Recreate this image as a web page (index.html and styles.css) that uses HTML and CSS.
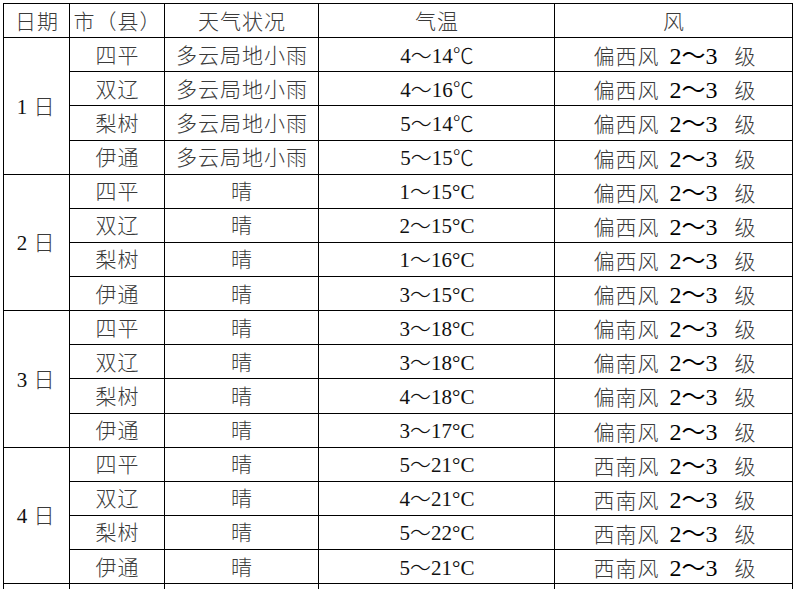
FILE: index.html
```html
<!DOCTYPE html>
<html lang="zh">
<head>
<meta charset="utf-8">
<link rel="stylesheet" href="styles.css">
</head>
<body>
<table class="wx">
  <colgroup>
    <col class="c-date"><col class="c-city"><col class="c-sky"><col class="c-temp"><col class="c-wind">
  </colgroup>
  <thead>
    <tr><th>日期</th><th>市（县）</th><th>天气状况</th><th>气温</th><th>风</th></tr>
  </thead>
  <tbody>
    <tr><td rowspan="4" class="date"><span class="num">1</span> 日</td><td>四平</td><td>多云局地小雨</td><td class="num">4～14℃</td><td class="wind">偏西风<span class="lvl">2～3</span>级</td></tr>
    <tr><td>双辽</td><td>多云局地小雨</td><td class="num">4～16℃</td><td class="wind">偏西风<span class="lvl">2～3</span>级</td></tr>
    <tr><td>梨树</td><td>多云局地小雨</td><td class="num">5～14℃</td><td class="wind">偏西风<span class="lvl">2～3</span>级</td></tr>
    <tr><td>伊通</td><td>多云局地小雨</td><td class="num">5～15℃</td><td class="wind">偏西风<span class="lvl">2～3</span>级</td></tr>

    <tr><td rowspan="4" class="date"><span class="num">2</span> 日</td><td>四平</td><td>晴</td><td class="num">1～15°C</td><td class="wind">偏西风<span class="lvl">2～3</span>级</td></tr>
    <tr><td>双辽</td><td>晴</td><td class="num">2～15°C</td><td class="wind">偏西风<span class="lvl">2～3</span>级</td></tr>
    <tr><td>梨树</td><td>晴</td><td class="num">1～16°C</td><td class="wind">偏西风<span class="lvl">2～3</span>级</td></tr>
    <tr><td>伊通</td><td>晴</td><td class="num">3～15°C</td><td class="wind">偏西风<span class="lvl">2～3</span>级</td></tr>

    <tr><td rowspan="4" class="date"><span class="num">3</span> 日</td><td>四平</td><td>晴</td><td class="num">3～18°C</td><td class="wind">偏南风<span class="lvl">2～3</span>级</td></tr>
    <tr><td>双辽</td><td>晴</td><td class="num">3～18°C</td><td class="wind">偏南风<span class="lvl">2～3</span>级</td></tr>
    <tr><td>梨树</td><td>晴</td><td class="num">4～18°C</td><td class="wind">偏南风<span class="lvl">2～3</span>级</td></tr>
    <tr><td>伊通</td><td>晴</td><td class="num">3～17°C</td><td class="wind">偏南风<span class="lvl">2～3</span>级</td></tr>

    <tr><td rowspan="4" class="date"><span class="num">4</span> 日</td><td>四平</td><td>晴</td><td class="num">5～21°C</td><td class="wind">西南风<span class="lvl">2～3</span>级</td></tr>
    <tr><td>双辽</td><td>晴</td><td class="num">4～21°C</td><td class="wind">西南风<span class="lvl">2～3</span>级</td></tr>
    <tr><td>梨树</td><td>晴</td><td class="num">5～22°C</td><td class="wind">西南风<span class="lvl">2～3</span>级</td></tr>
    <tr><td>伊通</td><td>晴</td><td class="num">5～21°C</td><td class="wind">西南风<span class="lvl">2～3</span>级</td></tr>

    <tr class="tail"><td></td><td></td><td></td><td></td><td></td></tr>
  </tbody>
</table>
</body>
</html>
```

FILE: styles.css
```css
html, body {
  margin: 0;
  padding: 0;
  background: #fff;
  overflow: hidden;
}
body {
  padding: 3px 0 0 3px;
}
.wx {
  border-collapse: collapse;
  table-layout: fixed;
  width: 789px;
  font-family: "Liberation Serif", "Noto Sans CJK SC", serif;
  font-size: 21px;
  color: #3a3a3a;
}
.c-date { width: 66px; }
.c-city { width: 95px; }
.c-sky { width: 154px; }
.c-temp { width: 236px; }
.c-wind { width: 238px; }
.wx th, .wx td {
  border: 1px solid #000;
  height: 34.125px;
  padding: 3px 0 0 0;
  text-align: center;
  vertical-align: middle;
  font-weight: 300;
  line-height: 1;
  white-space: nowrap;
  box-sizing: border-box;
  letter-spacing: 1px;
  text-indent: 1px;
}
.wx .num {
  color: #111;
  font-size: 21px;
  letter-spacing: 0;
}
.wx td.num {
  text-indent: 0;
  padding-left: 1px;
}
.wx .date {
  padding-right: 2px;
}
.wx .wind {
  padding-left: 2px;
}
.wx .lvl {
  font-size: 24px;
  color: #000;
  font-weight: 400;
  letter-spacing: 0;
  margin: 0 17px 0 10px;
}
```
